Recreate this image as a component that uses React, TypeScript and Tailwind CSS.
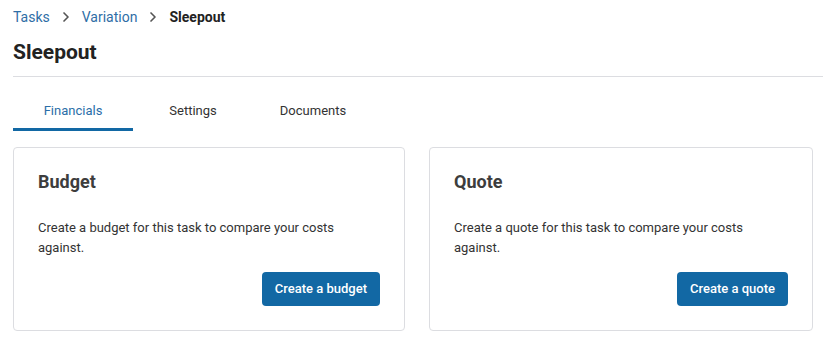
import { ChevronRight } from "lucide-react";

const tabs = ["Financials", "Settings", "Documents"];

function Card({ title, text, action, width }: { title: string; text: string; action: string; width: string }) {
  return (
    <div className={`${width} rounded border border-[#dcdde1] bg-white px-6 pt-[22px] pb-6 flex flex-col`}>
      <h2 className="text-[18px] font-bold leading-[24px] text-[#3d3d3d]">{title}</h2>
      <p className="mt-[24px] text-[13px] leading-[20px] text-[#333]">{text}</p>
      <div className="mt-[14px] flex justify-end">
        <button className="h-[34px] rounded bg-[#1268a4] px-[13px] text-[13px] font-medium text-white">
          {action}
        </button>
      </div>
    </div>
  );
}

export default function App() {
  return (
    <div className="min-h-[343px] bg-white pl-[13px] pr-px font-['Roboto',sans-serif]">
      {/* Breadcrumb */}
      <nav className="flex items-center pt-[7px] text-[14px] leading-[20px]">
        <span className="text-[#2f6ea6]">Tasks</span>
        <ChevronRight className="mx-[8px] size-[16px] text-[#555]" strokeWidth={2.5} />
        <span className="text-[#2f6ea6]">Variation</span>
        <ChevronRight className="mx-[8px] size-[16px] text-[#555]" strokeWidth={2.5} />
        <span className="font-bold text-[#222]">Sleepout</span>
      </nav>

      <h1 className="mt-[12px] text-[21px] font-bold leading-[26px] text-[#222]">Sleepout</h1>
      <div className="mt-[11px] border-b border-[#dcdde1]" />

      {/* Tabs */}
      <div className="mt-[24px] flex">
        {tabs.map((t, i) => (
          <div
            key={t}
            className={`w-[120px] pb-[8px] text-center text-[13px] leading-[19px] border-b-[3px] ${
              i === 0 ? "border-[#1268a4] text-[#2a6ea8]" : "border-transparent text-[#333]"
            }`}
          >
            {t}
          </div>
        ))}
      </div>

      <div className="mt-[16px] flex gap-[24px]">
        <Card
          width="w-[392px]"
          title="Budget"
          text="Create a budget for this task to compare your costs against."
          action="Create a budget"
        />
        <Card
          width="w-[384px]"
          title="Quote"
          text="Create a quote for this task to compare your costs against."
          action="Create a quote"
        />
      </div>
    </div>
  );
}
